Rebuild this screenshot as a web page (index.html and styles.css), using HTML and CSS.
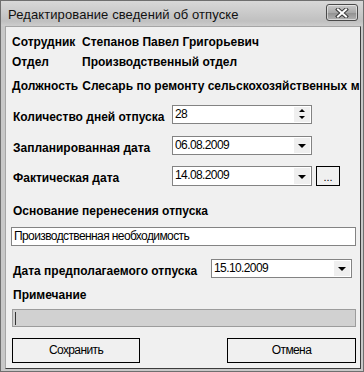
FILE: index.html
```html
<!DOCTYPE html>
<html lang="ru">
<head>
    <meta charset="UTF-8">
    <title>Редактирование сведений об отпуске</title>
    <link rel="stylesheet" href="styles.css">
</head>
<body>
    <div class="window">
        <!-- Title bar -->
        <div class="titlebar">
            <span class="title">Редактирование сведений об отпуске</span>
            <span class="close-btn">
                <svg width="14" height="10" viewBox="0 0 14 10">
                    <path d="M3 1.5 L11 8.5 M11 1.5 L3 8.5" stroke="#3a3a3a" stroke-width="4" stroke-linecap="square"/>
                    <path d="M3 1.5 L11 8.5 M11 1.5 L3 8.5" stroke="#fff" stroke-width="2" stroke-linecap="square"/>
                </svg>
            </span>
        </div>

        <!-- Form -->
        <div class="client">
            <div class="info-row">
                <span class="info-label">Сотрудник</span>
                <span class="info-value">Степанов Павел Григорьевич</span>
            </div>
            <div class="info-row">
                <span class="info-label">Отдел</span>
                <span class="info-value">Производственный отдел</span>
            </div>
            <div class="info-row info-post">
                <span class="info-label">Должность</span>
                <span class="info-value">Слесарь по ремонту сельскохозяйственных м</span>
            </div>

            <div class="field-row row-days">
                <span class="field-label">Количество дней отпуска</span>
                <div class="box">
                    <span class="box-text">28</span>
                    <span class="spin-btn">
                        <span class="tri-up"></span>
                        <span class="tri-down"></span>
                    </span>
                </div>
            </div>
            <div class="field-row row-planned">
                <span class="field-label">Запланированная дата</span>
                <div class="box">
                    <span class="box-text">06.08.2009</span>
                    <span class="drop-btn"><span class="tri-drop"></span></span>
                </div>
            </div>
            <div class="field-row row-actual">
                <span class="field-label">Фактическая дата</span>
                <div class="box">
                    <span class="box-text">14.08.2009</span>
                    <span class="drop-btn"><span class="tri-drop"></span></span>
                </div>
                <span class="dots-btn">...</span>
            </div>

            <div class="block-label label-reason">Основание перенесения отпуска</div>
            <div class="box box-wide">
                <span class="box-text">Производственная необходимость</span>
            </div>

            <div class="field-row row-expected">
                <span class="field-label label-long">Дата предполагаемого отпуска</span>
                <div class="box box-expected">
                    <span class="box-text">15.10.2009</span>
                    <span class="drop-btn"><span class="tri-drop"></span></span>
                </div>
            </div>

            <div class="block-label label-note">Примечание</div>
            <div class="note-box"><span class="caret"></span></div>

            <div class="buttons">
                <span class="btn btn-save">Сохранить</span>
                <span class="btn btn-cancel">Отмена</span>
            </div>
        </div>
    </div>
</body>
</html>
```

FILE: styles.css
```css
/* Basic styling */
body {
    margin: 0;
    padding: 0;
    background-color: #fff;
    font-family: "Liberation Sans", Arial, sans-serif;
    color: #000;
}
.window {
    width: 364px;
    height: 372px;
    box-sizing: border-box;
    border: 1px solid #6f6f6f;
    background-color: #c8c8c8;
    display: flex;
    flex-direction: column;
}
/* Title bar */
.titlebar {
    height: 25px;
    flex-shrink: 0;
    display: flex;
    align-items: center;
    padding: 0 5px 0 7px;
    background: linear-gradient(#d8d8d8, #c0c0c0 80%, #cdcdcd);
}
.title {
    font-size: 13px;
    letter-spacing: 0.1px;
    color: #111;
    margin-top: 1px;
}
.close-btn {
    margin-left: auto;
    width: 30px;
    height: 15px;
    border: 1px solid #4a4a4a;
    border-radius: 3px;
    background: linear-gradient(#c9c9c9, #a9a9a9 50%, #8f8f8f 51%, #b2b2b2);
    box-shadow: inset 0 0 0 1px rgba(255, 255, 255, 0.5);
    display: flex;
    align-items: center;
    justify-content: center;
    margin-top: -2px;
}
/* Client area */
.client {
    flex: 1;
    margin: 0 2px 2px 4px;
    border: 1px solid;
    border-color: #a5a5a5 #3c3c3c #3c3c3c #a5a5a5;
    background-color: #f0f0f0;
    padding: 5px 0 0 5px;
    overflow: hidden;
}
.info-row {
    display: flex;
    height: 20px;
    line-height: 20px;
    font-size: 12px;
    font-weight: bold;
    white-space: nowrap;
}
.info-post {
    margin-top: 4px;
}
.info-label {
    min-width: 66px;
    padding-left: 1px;
    padding-right: 4px;
    flex-shrink: 0;
}
.field-row {
    display: flex;
    height: 19px;
}
.row-days { margin-top: 9px; }
.row-planned { margin-top: 12px; }
.row-actual { margin-top: 11px; height: 20px; }
.row-expected { margin-top: 13px; }
.field-label {
    width: 159px;
    padding-left: 2px;
    flex-shrink: 0;
    padding-top: 5px;
    line-height: 14px;
    font-size: 12px;
    font-weight: bold;
    white-space: nowrap;
}
.label-long {
    width: 198px;
}
.block-label {
    padding-left: 2px;
    line-height: 14px;
    font-size: 12px;
    font-weight: bold;
}
.label-reason { margin-top: 18px; }
.label-note { margin-top: 10px; }
/* Input boxes */
.box {
    width: 140px;
    box-sizing: border-box;
    border: 1px solid #838383;
    background-color: #fff;
    display: flex;
}
.box-wide {
    width: 345px;
    height: 19px;
    margin-top: 9px;
}
.box-expected {
    width: 141px;
}
.box-text {
    flex: 1;
    padding-left: 2px;
    line-height: 16px;
    font-size: 12px;
    letter-spacing: -0.6px;
    white-space: nowrap;
}
.drop-btn, .spin-btn {
    width: 16px;
    margin: 1px 1px 1px 0;
    background-color: #efefef;
    display: flex;
    align-items: center;
    justify-content: center;
}
.spin-btn {
    flex-direction: column;
    justify-content: space-between;
    padding: 2px 0 3px;
    box-sizing: border-box;
}
.tri-drop {
    width: 0;
    height: 0;
    border-left: 4px solid transparent;
    border-right: 4px solid transparent;
    border-top: 4px solid #000;
    margin-top: 1px;
}
.tri-up {
    width: 0;
    height: 0;
    border-left: 3px solid transparent;
    border-right: 3px solid transparent;
    border-bottom: 3px solid #000;
}
.tri-down {
    width: 0;
    height: 0;
    border-left: 3px solid transparent;
    border-right: 3px solid transparent;
    border-top: 3px solid #000;
}
.dots-btn {
    width: 22px;
    height: 18px;
    margin-left: 4px;
    border: 1px solid #000;
    background-color: #f0f0f0;
    font-size: 11px;
    line-height: 20px;
    text-align: center;
}
/* Note box (read only) */
.note-box {
    width: 344px;
    height: 18px;
    margin: 7px 0 0 1px;
    box-sizing: border-box;
    border: 1px solid #9c9c9c;
    background-color: #d1d1d1;
    padding: 2px 0 0 2px;
}
.caret {
    display: block;
    width: 1px;
    height: 13px;
    background-color: #333;
}
/* Buttons */
.buttons {
    display: flex;
    justify-content: space-between;
    width: 345px;
    margin-top: 11px;
}
.btn {
    height: 25px;
    box-sizing: border-box;
    border: 1px solid #000;
    background-color: #f0f0f0;
    font-size: 12px;
    letter-spacing: -0.6px;
    line-height: 23px;
    text-align: center;
}
.btn-save {
    width: 128px;
    margin-left: 1px;
}
.btn-cancel {
    width: 129px;
}
```
